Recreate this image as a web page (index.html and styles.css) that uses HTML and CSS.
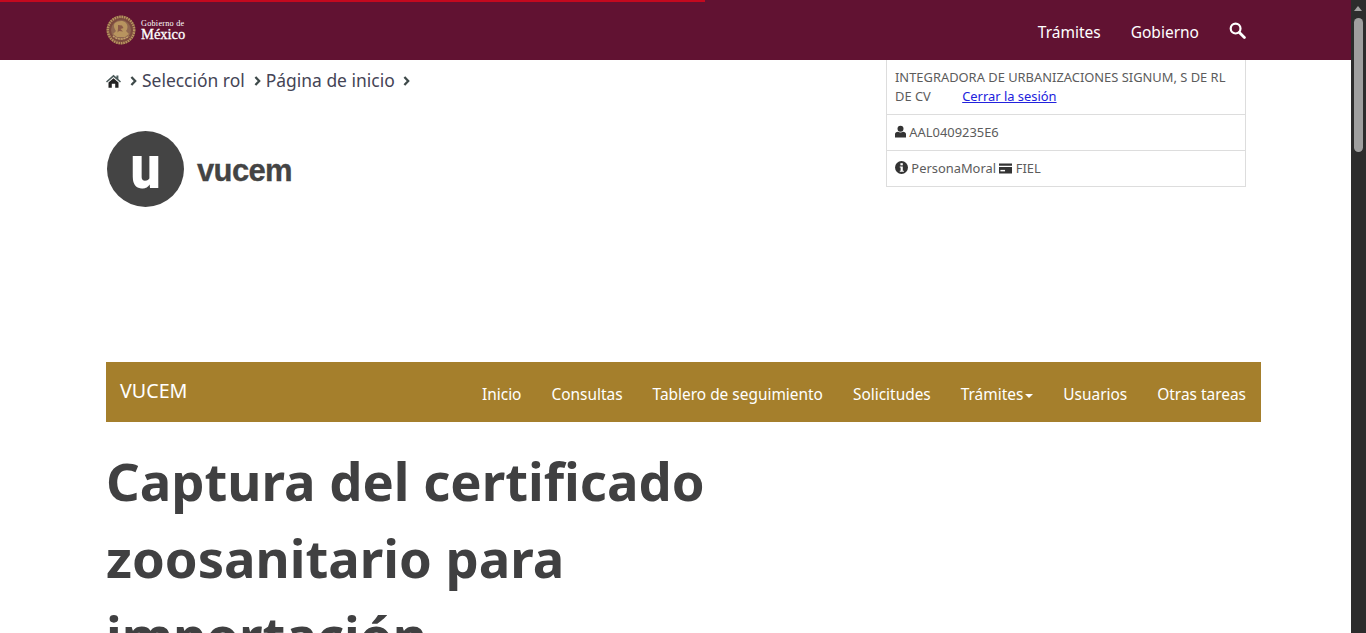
FILE: index.html
```html
<!DOCTYPE html>
<html lang="es">
<head>
<meta charset="utf-8">
<title>Captura del certificado zoosanitario para importación</title>
<link rel="stylesheet" href="styles.css">
</head>
<body>
<div class="progress"></div>
<header class="topbar">
  <div class="topbar-inner">
    <a class="gob-logo" href="#">
      <svg class="emblem" width="30" height="30" viewBox="0 0 30 30" aria-hidden="true">
        <circle cx="15" cy="15" r="14.500" fill="#7c4a3e"/>
        <circle cx="15" cy="15" r="13.200" fill="none" stroke="#b8945f" stroke-width="2.400" stroke-dasharray="1.500 .9"/>
        <circle cx="15" cy="15" r="10" fill="#8f6650"/>
        <path d="M9 8c3-2 8-3 11 0 2 2 2 6 0 8l3 3-4 3H11l-4-3 3-3C8 13 7 10 9 8z" fill="#b8945f"/>
        <path d="M12 10l4 .5 1.500 2.500-3 1 2.500 2.500-4-.5-1.500 1.500.5-4z" fill="#8a5a48"/>
        <path d="M7 21c4 4 12 4 16 0" fill="none" stroke="#c2a06a" stroke-width="1.500" stroke-dasharray="2 .8"/>
      </svg>
      <span class="gob-text"><span class="gob-small">Gobierno de</span><span class="gob-big">México</span></span>
    </a>
    <nav class="topnav">
      <a href="#">Trámites</a>
      <a href="#">Gobierno</a>
      <a href="#" class="search" aria-label="Buscar">
        <svg width="17" height="17" viewBox="0 0 17 17"><circle cx="6.600" cy="6.600" r="4.900" fill="none" stroke="#fff" stroke-width="2.200"/><path d="M10.400 10.400l5 5" stroke="#fff" stroke-width="2.800" stroke-linecap="round"/></svg>
      </a>
    </nav>
  </div>
</header>

<main class="container">
  <div class="head-row">
    <div class="head-left">
      <ol class="crumbs">
        <li><svg class="home" width="15" height="14" viewBox="0 0 15 14"><path d="M7.500 .8L0 7.400l1 1.100L7.500 2.900 14 8.500l1-1.100-2.600-2.300V1.400h-2v1.900z" fill="#4d5c5c"/><path d="M2.500 8.600L7.500 4.200l5 4.400v5.200H9.200V9.800H5.800v4H2.500z" fill="#222"/></svg></li>
        <li class="sep"><svg width="7" height="10" viewBox="0 0 7 10"><path d="M1.400 1l3.800 4-3.800 4" fill="none" stroke="#3f4a4a" stroke-width="2.300"/></svg></li>
        <li><a href="#">Selección rol</a></li>
        <li class="sep"><svg width="7" height="10" viewBox="0 0 7 10"><path d="M1.400 1l3.800 4-3.800 4" fill="none" stroke="#3f4a4a" stroke-width="2.300"/></svg></li>
        <li><a href="#">Página de inicio</a></li>
        <li class="sep"><svg width="7" height="10" viewBox="0 0 7 10"><path d="M1.400 1l3.800 4-3.800 4" fill="none" stroke="#3f4a4a" stroke-width="2.300"/></svg></li>
      </ol>
      <div class="vucem-logo">
        <span class="vucem-circle"><span class="vucem-u">u</span></span>
        <span class="vucem-word">vucem</span>
      </div>
    </div>
    <table class="user-panel">
      <tr><td>INTEGRADORA DE URBANIZACIONES SIGNUM, S DE RL DE CV <a class="logout" href="#">Cerrar la sesión</a></td></tr>
      <tr><td><svg class="ico" width="11" height="13" viewBox="0 0 11 12"><circle cx="5.500" cy="3.200" r="3" fill="#333"/><path d="M0 12V8.600C0 7.200 1.200 6.400 3 6.200c1.400 1 3.600 1 5 0 1.800.2 3 1 3 2.400V12z" fill="#333"/></svg> AAL0409235E6</td></tr>
      <tr><td><svg class="ico" width="13" height="13" viewBox="0 0 12 12"><circle cx="6" cy="6" r="6" fill="#333"/><rect x="5" y="2" width="2.200" height="2" fill="#fff"/><path d="M4.400 5h2.800v4h1v1H4.400V9h.8V6h-.8z" fill="#fff"/></svg> PersonaMoral <svg class="ico" width="13" height="11" viewBox="0 0 14 11"><path d="M0 0h14v2.600H0zM0 4h14v7H0z" fill="#333"/><rect x="1.500" y="7" width="5" height="1.600" fill="#fff"/></svg> FIEL</td></tr>
    </table>
  </div>

  <nav class="subnav">
    <a class="brand" href="#">VUCEM</a>
    <ul class="subnav-links">
      <li><a href="#">Inicio</a></li>
      <li><a href="#">Consultas</a></li>
      <li><a href="#">Tablero de seguimiento</a></li>
      <li><a href="#">Solicitudes</a></li>
      <li><a href="#">Trámites<span class="caret"></span></a></li>
      <li><a href="#">Usuarios</a></li>
      <li><a href="#">Otras tareas</a></li>
    </ul>
  </nav>

  <h1 class="title">Captura del certificado zoosanitario para importación</h1>
</main>

<div class="scrollbar" aria-hidden="true">
  <span class="arrow"></span>
  <span class="thumb"></span>
</div>
</body>
</html>
```
FILE: styles.css
```css
html, body {
  margin: 0;
  height: 100%;
  overflow: hidden;
  background: #fff;
}
body {
  font-family: "Noto Sans", sans-serif;
  font-size: 18px;
  color: #404041;
}
a { text-decoration: none; color: inherit; }

.progress {
  position: fixed;
  top: 0;
  left: 0;
  width: 705px;
  height: 2px;
  background: #c4091f;
}
.topbar {
  height: 60px;
  background: #611232;
  padding-right: 15px;
}
.topbar-inner {
  width: 1140px;
  height: 60px;
  margin-left: 106px;
  display: flex;
  align-items: center;
  justify-content: space-between;
}
.gob-logo { display: flex; align-items: center; gap: 5px; margin-top: -1px; }
.emblem { display: block; }
.gob-text { display: flex; flex-direction: column; color: #fff; font-family: "Liberation Serif", serif; }
.gob-small { font-size: 8.200px; line-height: 8px; letter-spacing: .25px; }
.gob-big { font-size: 14.500px; line-height: 12px; font-weight: 400; -webkit-text-stroke: .3px #fff; }
.topnav { display: flex; align-items: center; gap: 30px; font-size: 15.500px; color: #fff; margin-top: 4px; }
.topnav .search { display: flex; margin-top: -4px; }

.container { width: 1155px; margin-left: 106px; }
.head-row {
  width: 1140px;
  height: 302px;
  display: flex;
  justify-content: space-between;
  align-items: flex-start;
}
.crumbs {
  list-style: none;
  margin: 0;
  padding: 8px 0 0;
  display: flex;
  align-items: center;
  height: 24px;
  font-size: 17.450px;
  color: #445;
}
.home { display: block; margin-top: 1px; }
.sep { margin: 2px 5px 0 9px; display: flex; }
.crumbs .sep:last-child { margin-left: 8px; }

.vucem-logo { display: flex; align-items: center; gap: 13px; margin: 39px 0 0 1px; }
.vucem-circle {
  width: 77px;
  height: 76px;
  border-radius: 50%;
  background: #444;
  color: #fff;
  display: flex;
  justify-content: center;
  font-family: Roboto, sans-serif;
  font-weight: 900;
  font-size: 62px;
  line-height: 72px;
}
.vucem-u { display: block; transform: scaleX(.86); }
.vucem-word {
  font-family: "Liberation Sans", sans-serif;
  font-weight: 700;
  font-size: 31px;
  letter-spacing: -.65px;
  -webkit-text-stroke: .3px #444;
  color: #444;
  margin-top: 3px;
}

.user-panel {
  width: 360px;
  border-collapse: collapse;
  font-size: 12.900px;
  line-height: 19px;
  color: #5c5c5c;
}
.user-panel td { border: 1px solid #ddd; padding: 8px; }
.user-panel tr:first-child td { border-top: 0; }
.logout { color: #2222dd; text-decoration: underline; margin-left: 28px; }
.ico { vertical-align: -1px; }

.subnav {
  height: 60px;
  background: #a57f2c;
  display: flex;
  justify-content: space-between;
  align-items: center;
  color: #fff;
  padding: 0 15px 0 14px;
}
.brand { font-size: 19.700px; margin-top: -3px; }
.subnav-links {
  list-style: none;
  display: flex;
  gap: 30px;
  margin: 5px 0 0;
  padding: 0;
  font-size: 15.430px;
}
.caret {
  display: inline-block;
  margin-left: 2px;
  vertical-align: middle;
  border-top: 4px solid #fff;
  border-left: 4px solid transparent;
  border-right: 4px solid transparent;
}
.title {
  width: 760px;
  margin: 20px 0 0;
  font-size: 52.600px;
  line-height: 77px;
  font-weight: 700;
  color: #404041;
}

.scrollbar {
  position: fixed;
  top: 0;
  right: 0;
  bottom: 0;
  width: 15px;
  background: #2c2c2c;
}
.arrow {
  position: absolute;
  top: 6px;
  left: 3px;
  border-bottom: 5px solid #a3a3a3;
  border-left: 4.500px solid transparent;
  border-right: 4.500px solid transparent;
}
.thumb {
  position: absolute;
  top: 18px;
  left: 3px;
  width: 9px;
  height: 134px;
  border-radius: 5px;
  background: #9f9f9f;
}
```
